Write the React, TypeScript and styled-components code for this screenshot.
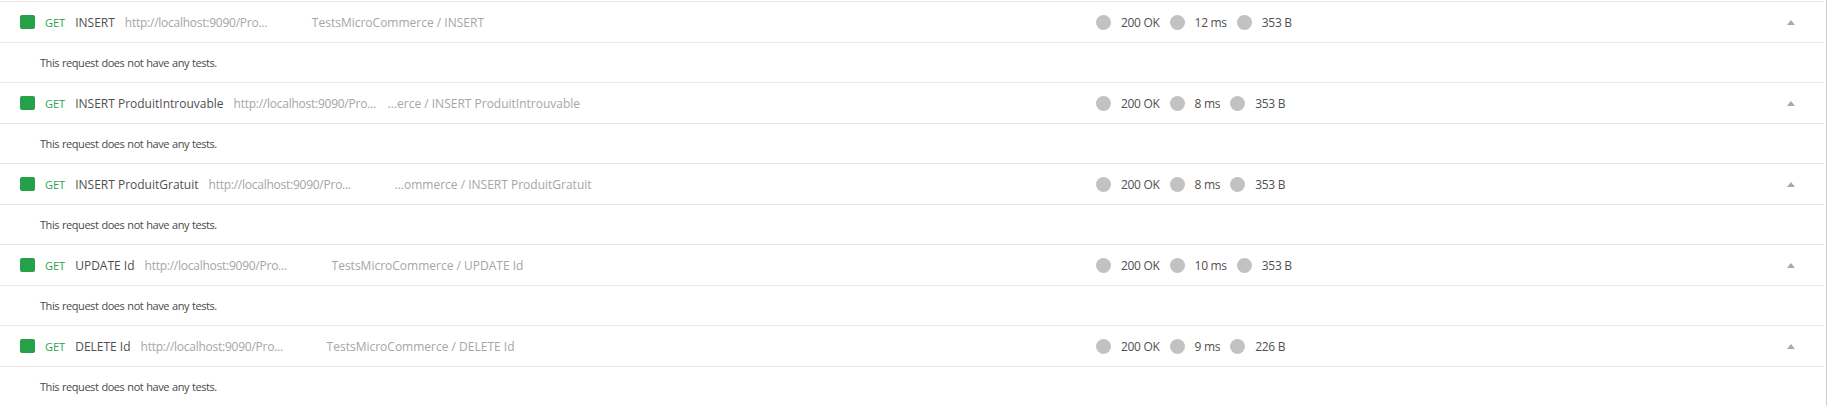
import React from "react";
import styled, { createGlobalStyle } from "styled-components";

const Global = createGlobalStyle`
  html, body { margin: 0; padding: 0; background: #ffffff; }
  body { font-family: "Open Sans", "Noto Sans", sans-serif; font-size: 11px; color: #505050; }
`;

const Page = styled.div`
  display: flex;
  width: 1828px;
  height: 406px;
  overflow: hidden;
  background: #fff;
`;

const List = styled.div`
  flex: 0 0 1824px;
  padding-top: 1px;
  display: flex;
  flex-direction: column;
`;

const ScrollLine = styled.div`
  flex: 0 0 1px;
  margin-left: 2px;
  background: #cfcfcf;
`;

const Block = styled.div`
  display: flex;
  flex-direction: column;
`;

const Header = styled.div`
  height: 40px;
  border-top: 1px solid #e8e8e8;
  display: flex;
  align-items: center;
  padding: 0 29px 0 20px;
`;

const Left = styled.div`
  flex: 0 0 1076px;
  display: flex;
  align-items: center;
  white-space: nowrap;
  overflow: hidden;
`;

const Square = styled.span`
  width: 15px;
  height: 14px;
  border-radius: 2px;
  background: #27a04a;
  margin-right: 10px;
  flex: none;
`;

const Method = styled.span`
  color: #2aa152;
  margin-right: 10px;
`;

const Name = styled.span`
  color: #505050;
  font-size: 12px;
  margin-right: 10px;
`;

const Url = styled.span`
  color: #a6a6a6;
  font-size: 12px;
  width: 147px;
  letter-spacing: -0.25px;
  flex: none;
`;

const Path = styled.span<{ $offset: number }>`
  color: #a6a6a6;
  font-size: 12px;
  margin-left: ${(p) => p.$offset}px;
`;

const Stats = styled.div`
  flex: 1;
  display: flex;
  align-items: center;
  gap: 10px;
`;

const Stat = styled.span`
  display: flex;
  align-items: center;
  gap: 10px;
  color: #505050;
  font-size: 12px;
  letter-spacing: -0.3px;
`;

const Dot = styled.span`
  width: 15px;
  height: 15px;
  border-radius: 50%;
  background: #c2c2c2;
  flex: none;
`;

const Caret = styled.svg`
  width: 8px;
  height: 5px;
  flex: none;
  margin-top: 1px;
`;

const Body = styled.div`
  height: 39px;
  border-top: 1px solid #e8e8e8;
  display: flex;
  align-items: center;
  padding-left: 40px;
  color: #4a4a4a;
  font-size: 11px;
  letter-spacing: -0.45px;
  word-spacing: 0.6px;
`;

type Row = {
  name: string;
  path: string;
  offset: number;
  status: string;
  time: string;
  size: string;
};

const rows: Row[] = [
  { name: "INSERT", path: "TestsMicroCommerce / INSERT", offset: 40, status: "200 OK", time: "12 ms", size: "353 B" },
  { name: "INSERT ProduitIntrouvable", path: "...erce / INSERT ProduitIntrouvable", offset: 7, status: "200 OK", time: "8 ms", size: "353 B" },
  { name: "INSERT ProduitGratuit", path: "...ommerce / INSERT ProduitGratuit", offset: 39, status: "200 OK", time: "8 ms", size: "353 B" },
  { name: "UPDATE Id", path: "TestsMicroCommerce / UPDATE Id", offset: 40, status: "200 OK", time: "10 ms", size: "353 B" },
  { name: "DELETE Id", path: "TestsMicroCommerce / DELETE Id", offset: 39, status: "200 OK", time: "9 ms", size: "226 B" },
];

export default function App() {
  return (
    <>
      <Global />
      <Page>
        <List>
          {rows.map((r) => (
            <Block key={r.name}>
              <Header>
                <Left>
                  <Square />
                  <Method>GET</Method>
                  <Name>{r.name}</Name>
                  <Url>http://localhost:9090/Pro...</Url>
                  <Path $offset={r.offset}>{r.path}</Path>
                </Left>
                <Stats>
                  <Stat><Dot />{r.status}</Stat>
                  <Stat><Dot />{r.time}</Stat>
                  <Stat><Dot />{r.size}</Stat>
                </Stats>
                <Caret viewBox="0 0 8 5">
                  <path d="M4 0 L8 5 L0 5 Z" fill="#a9a9a9" />
                </Caret>
              </Header>
              <Body>This request does not have any tests.</Body>
            </Block>
          ))}
        </List>
        <ScrollLine />
      </Page>
    </>
  );
}
